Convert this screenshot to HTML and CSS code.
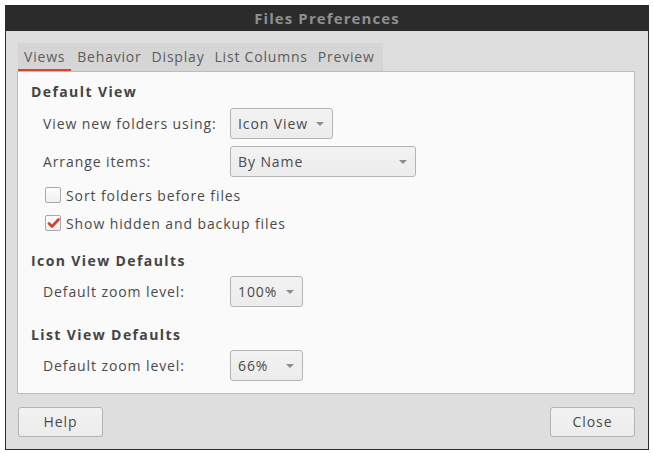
FILE: index.html
```html
<!DOCTYPE html>
<html>
<head>
<meta charset="utf-8">
<link rel="stylesheet" href="styles.css">
</head>
<body>
<div class="window">
  <div class="titlebar">Files Preferences</div>
  <div class="dialog">
    <div class="tabs">
      <div class="tab active">Views</div>
      <div class="tab">Behavior</div>
      <div class="tab">Display</div>
      <div class="tab">List Columns</div>
      <div class="tab">Preview</div>
    </div>
    <div class="page">
      <div class="heading h1">Default View</div>
      <div class="row r1">
        <div class="label">View new folders using:</div>
        <div class="combo w-icon"><span>Icon View</span><i class="arrow"></i></div>
      </div>
      <div class="row r2">
        <div class="label">Arrange items:</div>
        <div class="combo w-name"><span>By Name</span><i class="arrow"></i></div>
      </div>
      <div class="check c1"><span class="box"></span><span>Sort folders before files</span></div>
      <div class="check"><span class="box checked"><svg width="13" height="13" viewBox="0 0 13 13"><path d="M2 6.5 L5 9.5 L11.5 2.5" fill="none" stroke="#d6412e" stroke-width="2.6" stroke-linejoin="round" stroke-linecap="round"/></svg></span><span>Show hidden and backup files</span></div>
      <div class="heading h2">Icon View Defaults</div>
      <div class="row r3">
        <div class="label">Default zoom level:</div>
        <div class="combo w-zoom"><span>100%</span><i class="arrow"></i></div>
      </div>
      <div class="heading h3">List View Defaults</div>
      <div class="row r3">
        <div class="label">Default zoom level:</div>
        <div class="combo w-zoom"><span>66%</span><i class="arrow"></i></div>
      </div>
    </div>
    <div class="buttons">
      <div class="button">Help</div>
      <div class="button">Close</div>
    </div>
  </div>
</div>
</body>
</html>
```
FILE: styles.css
```css
* { box-sizing: border-box; }
html, body { margin: 0; padding: 0; background: #ffffff; }
body {
  font-family: "Open Sans", "Noto Sans", sans-serif;
  font-size: 14px;
  letter-spacing: 0.9px;
  color: #4a4a4a;
  padding: 5px;
}
.window {
  width: 644px;
  height: 445px;
  border: 1px solid #2b2b2b;
  border-top: none;
  background: #dedede;
  display: flex;
  flex-direction: column;
}
.titlebar {
  height: 26px;
  background: #2b2b2b;
  color: #8f8f8f;
  font-weight: bold;
  font-size: 15px;
  letter-spacing: 1.1px;
  text-align: center;
  line-height: 26px;
  margin: 0 -1px;
}
.dialog {
  flex: 1;
  display: flex;
  flex-direction: column;
  padding: 12px 13px 11px 11px;
}
.tabs {
  display: flex;
  align-self: flex-start;
  height: 28px;
  background: #d5d5d5;
  margin-left: 1px;
  padding-right: 4px;
}
.tab {
  padding: 0 4px 0 6px;
  line-height: 27px;
  color: #5c5c5c;
  font-size: 14px;
  letter-spacing: 0.8px;
}
.tab.active {
  border-bottom: 2px solid #d8452e;
  padding-right: 6px;
}
.page {
  height: 323px;
  background: #fafafa;
  border: 1px solid #bcbcbc;
  padding: 10px 0 0 13px;
}
.heading {
  font-weight: bold;
  height: 20px;
  line-height: 20px;
  color: #444;
  letter-spacing: 1.4px;
}
.row {
  display: flex;
  align-items: center;
  padding-left: 12px;
  height: 31px;
}
.r1 { margin-top: 6px; }
.r2 { margin-top: 7px; }
.r3 { margin-top: 5px; }
.h2 { margin-top: 14px; }
.h3 { margin-top: 18px; }
.label { width: 187px; }
.combo {
  height: 31px;
  border: 1px solid #b4b4b4;
  border-radius: 3px;
  background: linear-gradient(#f2f2f2, #ececec);
  display: flex;
  align-items: center;
  justify-content: space-between;
  padding: 0 8px 0 7px;
}
.w-icon { width: 103px; }
.w-name { width: 186px; }
.w-zoom { width: 73px; }
.arrow {
  width: 0;
  height: 0;
  border-left: 4px solid transparent;
  border-right: 4px solid transparent;
  border-top: 4px solid #8c8c8c;
}
.check {
  display: flex;
  align-items: center;
  height: 28px;
  padding-left: 14px;
}
.c1 { margin-top: 4px; }
.box {
  width: 16px;
  height: 16px;
  border: 1px solid #a8a8a8;
  border-radius: 2px;
  background: linear-gradient(#fdfdfd, #f0f0f0);
  margin-right: 5px;
  display: flex;
  align-items: center;
  justify-content: center;
}
.buttons {
  display: flex;
  justify-content: space-between;
  margin-top: 13px;
  padding-left: 1px;
}
.button {
  width: 85px;
  height: 30px;
  border: 1px solid #b4b4b4;
  border-radius: 3px;
  background: linear-gradient(#f2f2f2, #ececec);
  text-align: center;
  line-height: 28px;
  color: #4a4a4a;
}
```
